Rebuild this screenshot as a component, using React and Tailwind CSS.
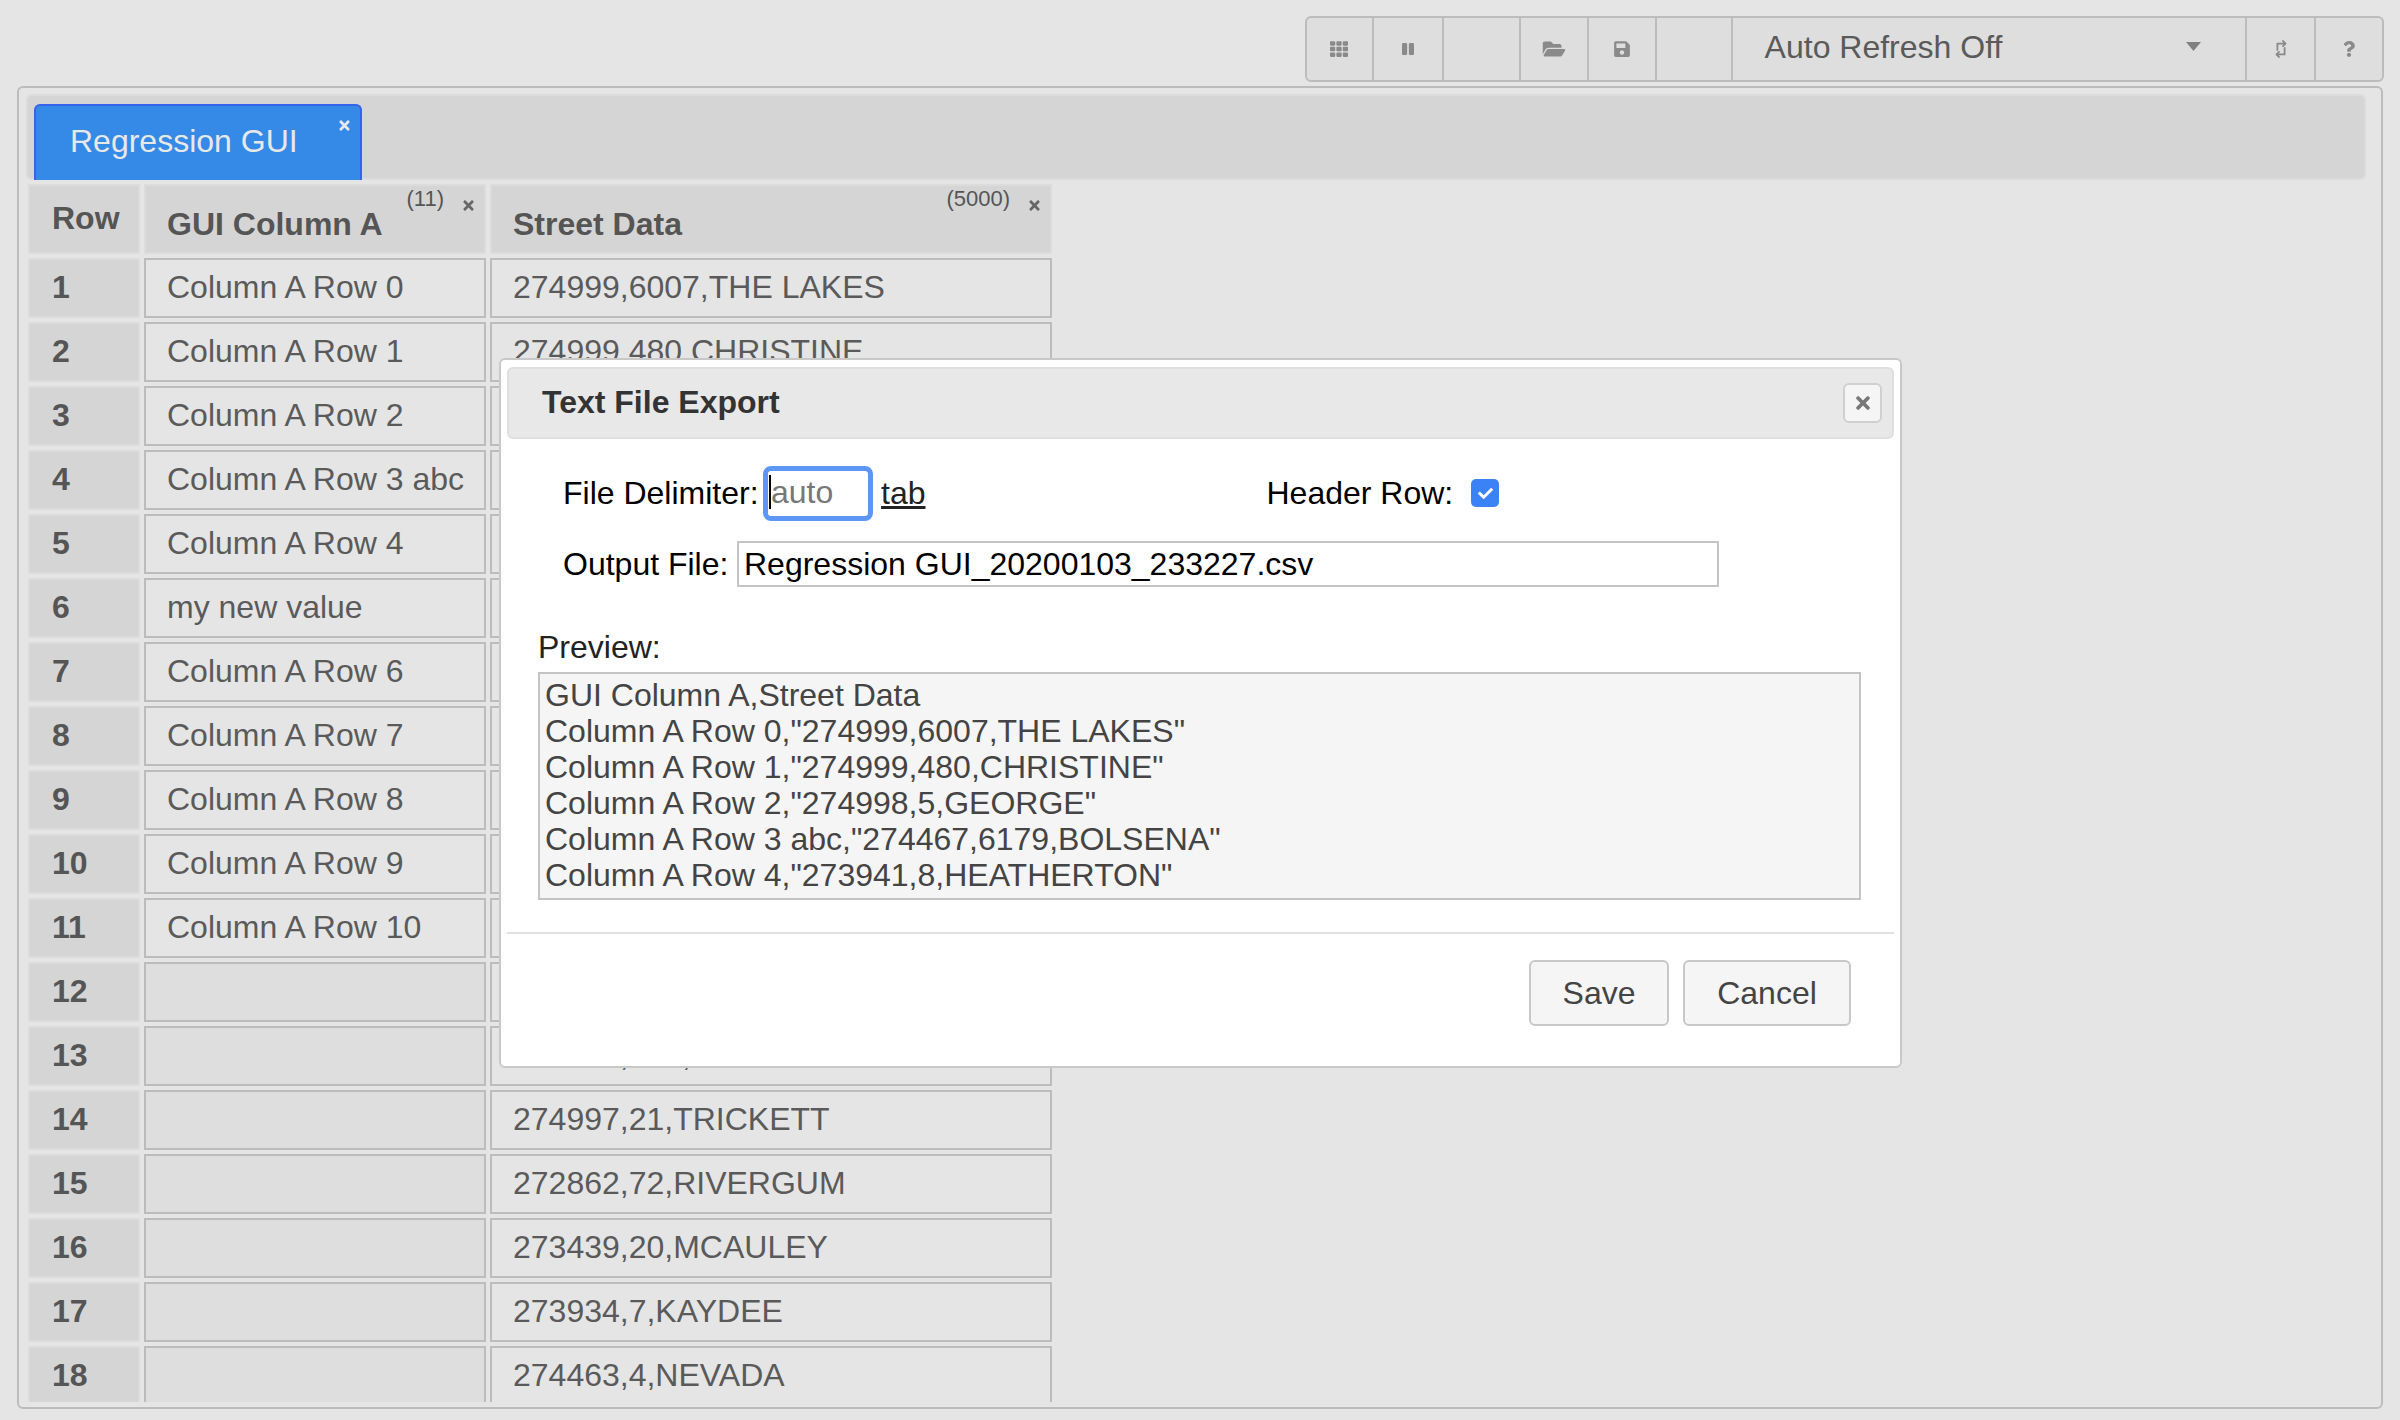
import React from "react";
import { FaTh, FaPause, FaFolderOpen, FaSave, FaTimes, FaQuestion, FaRetweet, FaCheck } from "react-icons/fa";

const colA = ["Column A Row 0","Column A Row 1","Column A Row 2","Column A Row 3 abc","Column A Row 4","my new value","Column A Row 6","Column A Row 7","Column A Row 8","Column A Row 9","Column A Row 10","","","","","","",""];
const colB = ["274999,6007,THE LAKES","274999,480,CHRISTINE","274998,5,GEORGE","274467,6179,BOLSENA","273941,8,HEATHERTON","274999,12,MAIN","274998,31,PARK","274997,44,HILL","274996,52,LAKE","274995,63,RIVER","274994,75,OAK","274993,86,ELM","274992,170,PINE","274997,21,TRICKETT","272862,72,RIVERGUM","273439,20,MCAULEY","273934,7,KAYDEE","274463,4,NEVADA"];
const preview = ["GUI Column A,Street Data",'Column A Row 0,"274999,6007,THE LAKES"','Column A Row 1,"274999,480,CHRISTINE"','Column A Row 2,"274998,5,GEORGE"','Column A Row 3 abc,"274467,6179,BOLSENA"','Column A Row 4,"273941,8,HEATHERTON"'];

function ToolBtn({ w, children, last }) {
  return (
    <div className={`flex items-center justify-center text-[#8a8a8a] h-full ${last ? "" : "border-r-2 border-[#bcbcbc]"} ${w}`}>{children}</div>
  );
}

function HeaderCell({ title, count, countW }) {
  return (
    <div className="relative h-[70px] bg-[#d5d5d5] border-2 border-[#dcdcdc] pl-[21px] pt-[16px] font-bold text-[#555] leading-[44px]">
      {title}
      <span className="absolute top-[-2px] right-[40px] text-[22px] font-normal leading-[30px] text-[#555]">{count}</span>
      <FaTimes className="absolute top-[12px] right-[8px] text-[#666] w-[15px] h-[15px]" />
    </div>
  );
}

export default function App() {
  return (
    <div className="relative h-[1420px] w-[2400px] overflow-hidden bg-[#e5e5e5] text-[32px] leading-[40px]" style={{ fontFamily: '"Liberation Sans", Arial, sans-serif' }}>
      <div className="flex justify-end pt-[16px] pr-[16px] h-[86px]">
        <div className="flex h-[66px] w-[1079px] rounded-[6px] border-2 border-[#bcbcbc] bg-[#dedede]">
          <ToolBtn w="w-[67px]"><FaTh className="w-[18px] h-[18px]" /></ToolBtn>
          <ToolBtn w="w-[70px]"><FaPause className="w-[12px] h-[18px]" /></ToolBtn>
          <ToolBtn w="w-[77px]" />
          <ToolBtn w="w-[68px]"><FaFolderOpen className="w-[24px] h-[20px]" /></ToolBtn>
          <ToolBtn w="w-[68px]"><FaSave className="w-[18px] h-[18px]" /></ToolBtn>
          <ToolBtn w="w-[76px]" />
          <div className="flex w-[515px] items-center justify-between border-r-2 border-[#bcbcbc] pl-[32px] pr-[44px] text-[#5a5a5a]">
            <span className="-mt-[4px]">Auto Refresh Off</span>
            <svg width="15" height="9" viewBox="0 0 15 9" className="-mt-[6px]"><path d="M0 0h15L7.5 9z" fill="#808080" /></svg>
          </div>
          <ToolBtn w="w-[69px]"><FaRetweet className="w-[18px] h-[24px] rotate-90" /></ToolBtn>
          <ToolBtn w="w-[66px]" last><FaQuestion className="w-[12px] h-[18px]" /></ToolBtn>
        </div>
      </div>

      <div className="mx-[17px] h-[1323px] rounded-[6px] border-2 border-[#bcbcbc] px-[9px] pt-[6px] overflow-hidden">
        <div className="ml-[-2px] mr-[6px] h-[86px] rounded-[6px] border-2 border-[#dcdcdc] bg-[#d5d5d5] pl-[6px] pt-[8px]">
          <div className="relative h-[76px] w-[328px] rounded-t-[6px] border-x-2 border-t-2 border-[#3563e9] bg-[#348ae6] pl-[34px] pt-[15px] text-[#e8e8e8]">
            Regression GUI
            <FaTimes className="absolute top-[12px] right-[8px] text-[#e8e8e8] w-[15px] h-[15px]" />
          </div>
        </div>
        <div className="mt-[4px] grid grid-cols-[112px_342px_562px] gap-[4px] h-[1218px] overflow-hidden">
          <div className="h-[70px] bg-[#d5d5d5] border-2 border-[#dcdcdc] pl-[22px] pt-[10px] font-bold text-[#555] leading-[44px]">Row</div>
          <HeaderCell title="GUI Column A" count="(11)" />
          <HeaderCell title="Street Data" count="(5000)" />
          {colB.map((b, i) => (
            <React.Fragment key={i}>
              <div className="h-[60px] bg-[#d5d5d5] border-2 border-[#dcdcdc] pl-[22px] font-bold text-[#555] leading-[54px]">{i + 1}</div>
              <div className={`h-[60px] border-2 border-[#bcbcbc] pl-[21px] text-[#5a5a5a] leading-[54px] ${colA[i] ? "bg-[#e5e5e5]" : "bg-[#dedede]"}`}>{colA[i]}</div>
              <div className="h-[60px] border-2 border-[#bcbcbc] bg-[#e5e5e5] pl-[21px] text-[#5a5a5a] leading-[54px]">{b}</div>
            </React.Fragment>
          ))}
        </div>
      </div>

      <div className="absolute left-[499px] top-[358px] h-[710px] w-[1403px] rounded-[6px] border-2 border-[#c8c8c8] bg-white px-[6px] pt-[7px] text-black">
        <div className="flex h-[72px] items-center justify-between rounded-[6px] border-2 border-[#dfdfdf] bg-[#e8e8e8] pl-[33px] pr-[10px]">
          <span className="font-bold text-[#333] -mt-[2px]">Text File Export</span>
          <button className="flex h-[40px] w-[39px] items-center justify-center rounded-[6px] border-2 border-[#d0d0d0] bg-[#f5f5f5]">
            <FaTimes className="h-[20px] w-[18px] text-[#777]" />
          </button>
        </div>
        <div className="pl-[56px] pt-[26px]">
          <div className="flex h-[56px] items-center">
            <span className="w-[200px]">File Delimiter:</span>
            <span className="relative block h-[55px] w-[110px] rounded-[8px] border-[5px] border-[#5c97f6] bg-white pl-[3px] text-[#777] leading-[42px]">
              auto
              <span className="absolute left-[1px] top-[4px] h-[34px] w-[2px] bg-black" />
            </span>
            <span className="ml-[8px] underline text-[#222]">tab</span>
            <span className="ml-[341px]">Header Row:</span>
            <span className="ml-[18px] flex h-[28px] w-[28px] items-center justify-center rounded-[5px] bg-[#3b82f6]">
              <FaCheck className="h-[15px] w-[15px] text-white" />
            </span>
          </div>
          <div className="mt-[20px] flex h-[46px] items-center">
            <span className="w-[174px]">Output File:</span>
            <span className="flex h-[46px] w-[982px] items-center border-2 border-[#c4c4c4] pl-[5px]">Regression GUI_20200103_233227.csv</span>
          </div>
        </div>
        <div className="ml-[31px] mr-[30px] pt-[46px]">
          <div className="h-[40px] -mt-[6px] mb-[5px] text-[#222]">Preview:</div>
          <div className="h-[228px] w-[1323px] border-2 border-[#c4c4c4] bg-[#f5f5f5] pl-[5px] pt-[3px] text-[#444] leading-[36px]">
            {preview.map((l) => <div key={l}>{l}</div>)}
          </div>
        </div>
        <div className="mt-[32px] h-[2px] bg-[#e2e2e2]" />
        <div className="flex justify-end gap-[14px] pr-[43px] pt-[26px]">
          <button className="h-[66px] w-[140px] rounded-[6px] border-2 border-[#c8c8c8] bg-[#f5f5f5] text-[#444]">Save</button>
          <button className="h-[66px] w-[168px] rounded-[6px] border-2 border-[#c8c8c8] bg-[#f5f5f5] text-[#444]">Cancel</button>
        </div>
      </div>
    </div>
  );
}
